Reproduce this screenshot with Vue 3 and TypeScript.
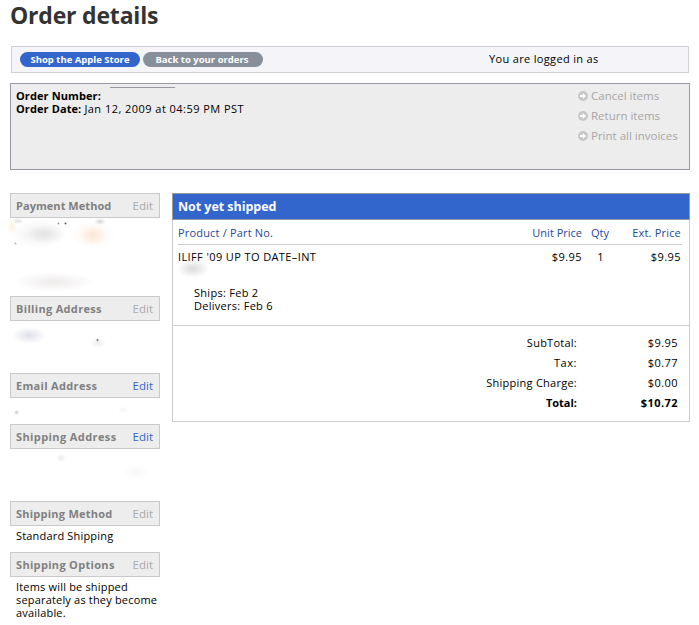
<script setup lang="ts">
interface Smudge { x: number; y: number; w: number; h: number; c: string }
interface Section {
  id: string
  title: string
  active: boolean
  text?: string
  smudges: Smudge[]
}

const sections: Section[] = [
  {
    id: 'payment', title: 'Payment Method', active: false,
    smudges: [
      { x: 0, y: 1, w: 56, h: 30, c: 'rgba(120,120,120,.12)' },
      { x: 18, y: 6, w: 38, h: 20, c: 'rgba(100,100,100,.1)' },
      { x: -3, y: 2, w: 10, h: 14, c: 'rgba(250,170,90,.2)' },
      { x: 60, y: 3, w: 46, h: 28, c: 'rgba(245,195,150,.16)' },
      { x: 70, y: 6, w: 26, h: 22, c: 'rgba(245,175,120,.22)' },
      { x: 84, y: 0, w: 12, h: 7, c: 'rgba(90,90,90,.25)' },
      { x: 2, y: 0, w: 12, h: 6, c: 'rgba(90,90,90,.2)' },
      { x: 4, y: 54, w: 80, h: 20, c: 'rgba(170,150,150,.2)' },
      { x: 47, y: 4, w: 3, h: 3, c: 'rgba(70,70,70,.6)' },
      { x: 54, y: 4, w: 3, h: 3, c: 'rgba(40,60,70,.9)' },
      { x: 4, y: 24, w: 3, h: 3, c: 'rgba(90,90,90,.5)' },
    ],
  },
  {
    id: 'billing', title: 'Billing Address', active: false,
    smudges: [
      { x: 2, y: 6, w: 34, h: 17, c: 'rgba(110,115,150,.22)' },
      { x: 80, y: 17, w: 16, h: 10, c: 'rgba(120,120,120,.14)' },
      { x: 86, y: 17, w: 3, h: 4, c: 'rgba(60,60,60,.75)' },
    ],
  },
  {
    id: 'email', title: 'Email Address', active: true,
    smudges: [
      { x: 4, y: 12, w: 5, h: 5, c: 'rgba(80,80,80,.35)' },
      { x: 108, y: 8, w: 10, h: 8, c: 'rgba(120,120,120,.08)' },
    ],
  },
  {
    id: 'shipto', title: 'Shipping Address', active: true,
    smudges: [
      { x: 46, y: 5, w: 10, h: 8, c: 'rgba(110,110,110,.15)' },
      { x: 113, y: 15, w: 26, h: 16, c: 'rgba(130,130,130,.07)' },
    ],
  },
  { id: 'method', title: 'Shipping Method', active: false, text: 'Standard Shipping', smudges: [] },
  { id: 'options', title: 'Shipping Options', active: false, text: 'Items will be shipped separately as they become available.', smudges: [] },
]

const actions = [
  { id: 'cancel', label: 'Cancel items' },
  { id: 'return', label: 'Return items' },
  { id: 'print', label: 'Print all invoices' },
]

const totals = [
  { id: 'sub', label: 'SubTotal:', value: '$9.95' },
  { id: 'tax', label: 'Tax:', value: '$0.77' },
  { id: 'ship', label: 'Shipping Charge:', value: '$0.00' },
  { id: 'total', label: 'Total:', value: '$10.72' },
]

const smudgeStyle = (s: Smudge) => ({
  left: `${s.x}px`,
  top: `${s.y}px`,
  width: `${s.w}px`,
  height: `${s.h}px`,
  background: `radial-gradient(closest-side, ${s.c}, transparent)`,
})
</script>

<template>
  <div class="page">
    <h1>Order details</h1>
    <nav class="toolbar">
      <a class="pill primary">Shop the Apple Store</a>
      <a class="pill back">Back to your orders</a>
      <span class="login">You are logged in as</span>
    </nav>
    <section class="summary">
      <i class="rule"></i>
      <div class="facts">
        <p><b class="num">Order Number:</b></p>
        <p><b class="date">Order Date:</b><span class="when">Jan 12, 2009 at 04:59 PM PST</span></p>
      </div>
      <ul>
        <li v-for="a in actions" :key="a.id">
          <svg width="10" height="10" viewBox="0 0 10 10">
            <circle cx="5" cy="5" r="4.9" fill="#c6c6c6" />
            <path d="M2 4.1h2.7V2L8.2 5 4.7 8V5.9H2z" fill="#fff" />
          </svg>
          <span>{{ a.label }}</span>
        </li>
      </ul>
    </section>
    <div class="columns">
      <aside>
        <section v-for="s in sections" :key="s.id" :class="['block', s.id]">
          <header><b>{{ s.title }}</b><a :class="{ active: s.active }">Edit</a></header>
          <div class="body">
            <i v-for="(m, i) in s.smudges" :key="i" class="smudge" :style="smudgeStyle(m)"></i>
            <p v-if="s.text">{{ s.text }}</p>
          </div>
        </section>
      </aside>
      <main>
        <h2>Not yet shipped</h2>
        <div class="items">
          <div class="row head">
            <span class="hp">Product / Part No.</span><span class="r">Unit Price</span><span class="q">Qty</span><span class="r he">Ext. Price</span>
          </div>
          <div class="row item">
            <span class="name">ILIFF '09 UP TO DATE–INT</span><span class="r">$9.95</span><span class="q one">1</span><span class="r">$9.95</span>
          </div>
          <i class="smudge part"></i>
          <div class="dates">
            <p>Ships: Feb 2</p>
            <p>Delivers: Feb 6</p>
          </div>
        </div>
        <div class="totals">
          <div v-for="t in totals" :key="t.id" :class="['line', t.id]">
            <span class="label">{{ t.label }}</span><span class="value">{{ t.value }}</span>
          </div>
        </div>
      </main>
    </div>
  </div>
</template>

<style>
body { margin: 0; background: #fff; }
</style>

<style scoped>
* { box-sizing: border-box; }
.page {
  width: 699px; height: 625px; overflow: hidden; padding: 0 9px 0 10px;
  font: 11px/13px "Lucida Grande", "Open Sans", "Noto Sans", sans-serif;
  color: #000; background: #fff; white-space: nowrap;
}
p, h1, h2, ul { margin: 0; padding: 0; }
h1 { height: 46px; font-size: 23px; line-height: 31px; font-weight: 700; color: #333; letter-spacing: -0.2px; }
.toolbar {
  height: 27px; margin: 0 0 10px 1px; width: 678px; padding: 0 0 0 8px;
  display: flex; align-items: center; border: 1px solid #d0d1d5; background: #f5f5f9;
}
.pill {
  width: 120px; height: 15px; margin-right: 3px; border-radius: 8px; background: #87909a; color: #fff;
  font-size: 9.5px; line-height: 15px; font-weight: 700; text-align: center;
}
.primary { background: #3366cc; }
.back { padding-right: 2px; }
.login { margin: -2px 0 0 223px; letter-spacing: 0.34px; }
.summary {
  position: relative; height: 87px; width: 680px; border: 1px solid #9999a3; background: #ededed;
  display: flex; justify-content: space-between; padding: 5px 0 0 5px;
}
.rule { position: absolute; left: 99px; top: 3px; width: 65px; height: 1px; background: #9999a3; }
.num { letter-spacing: 0.1px; }
.date { letter-spacing: 0.1px; }
.when { margin-left: 3px; letter-spacing: 0.46px; }
ul { list-style: none; width: 111px; }
li { height: 20px; display: flex; align-items: flex-start; color: #a6a6a6; font-size: 11.5px; }
li svg { margin: 2px 3px 0 0; }
.columns { display: flex; margin-top: 23px; gap: 12px; }
aside { width: 150px; }
.block header {
  height: 25px; border: 1px solid #c9c9c9; background: #ededed; padding: 0 6px 0 5px;
  display: flex; justify-content: space-between; line-height: 24px; color: #808080; letter-spacing: 0.32px;
}
.block.payment b { letter-spacing: 0.05px; }
.block.shipto b { letter-spacing: 0.4px; }
.block.method b { letter-spacing: 0.24px; }
header a { color: #aaa; font-size: 11.5px; letter-spacing: 0; }
header a.active { color: #3366cc; }
.body { position: relative; padding: 3px 0 0 6px; white-space: normal; letter-spacing: 0.18px; }
.body p { width: 144px; }
.payment .body { height: 78px; }
.billing .body { height: 52px; }
.email .body { height: 26px; }
.shipto .body { height: 52px; }
.method .body { height: 26px; }
.smudge { position: absolute; filter: blur(.4px); }
main { width: 518px; height: 229px; border: 1px solid #ccc; border-top: 0; }
h2 {
  margin: 0 -1px; height: 27px; border: 1px solid #9999a3; background: #3366cc; color: #fff;
  font-size: 12.5px; line-height: 25px; padding-left: 5px; letter-spacing: -0.05px;
}
.items { position: relative; height: 106px; padding: 0 7px 0 5px; border-bottom: 1px solid #ccc; }
.row { display: grid; grid-template-columns: 304px 100px 36px 63px; }
.row .r { text-align: right; }
.row .q { text-align: center; }
.row .one { padding-left: 1px; }
.head { height: 25px; line-height: 26px; border-bottom: 1px solid #ccc; color: #26479c; }
.hp { letter-spacing: 0.18px; }
.he { letter-spacing: 0.2px; }
.item { line-height: 24px; }
.item .r { letter-spacing: 0.45px; }
.name { letter-spacing: 0.39px; }
.part { left: 4px; top: 39px; width: 32px; height: 19px; background: radial-gradient(closest-side, rgba(90,90,90,.22), transparent); }
.dates { padding: 17px 0 0 16px; letter-spacing: 0.28px; }
.totals { padding: 7px 11px 0 0; }
.line { display: grid; grid-template-columns: 404px 101px; line-height: 20px; text-align: right; }
.label { letter-spacing: 0.25px; }
.value { letter-spacing: 0.45px; }
.tax .label { letter-spacing: 0.55px; }
.total { font-weight: 700; }
.total .label { letter-spacing: 0; }
</style>
